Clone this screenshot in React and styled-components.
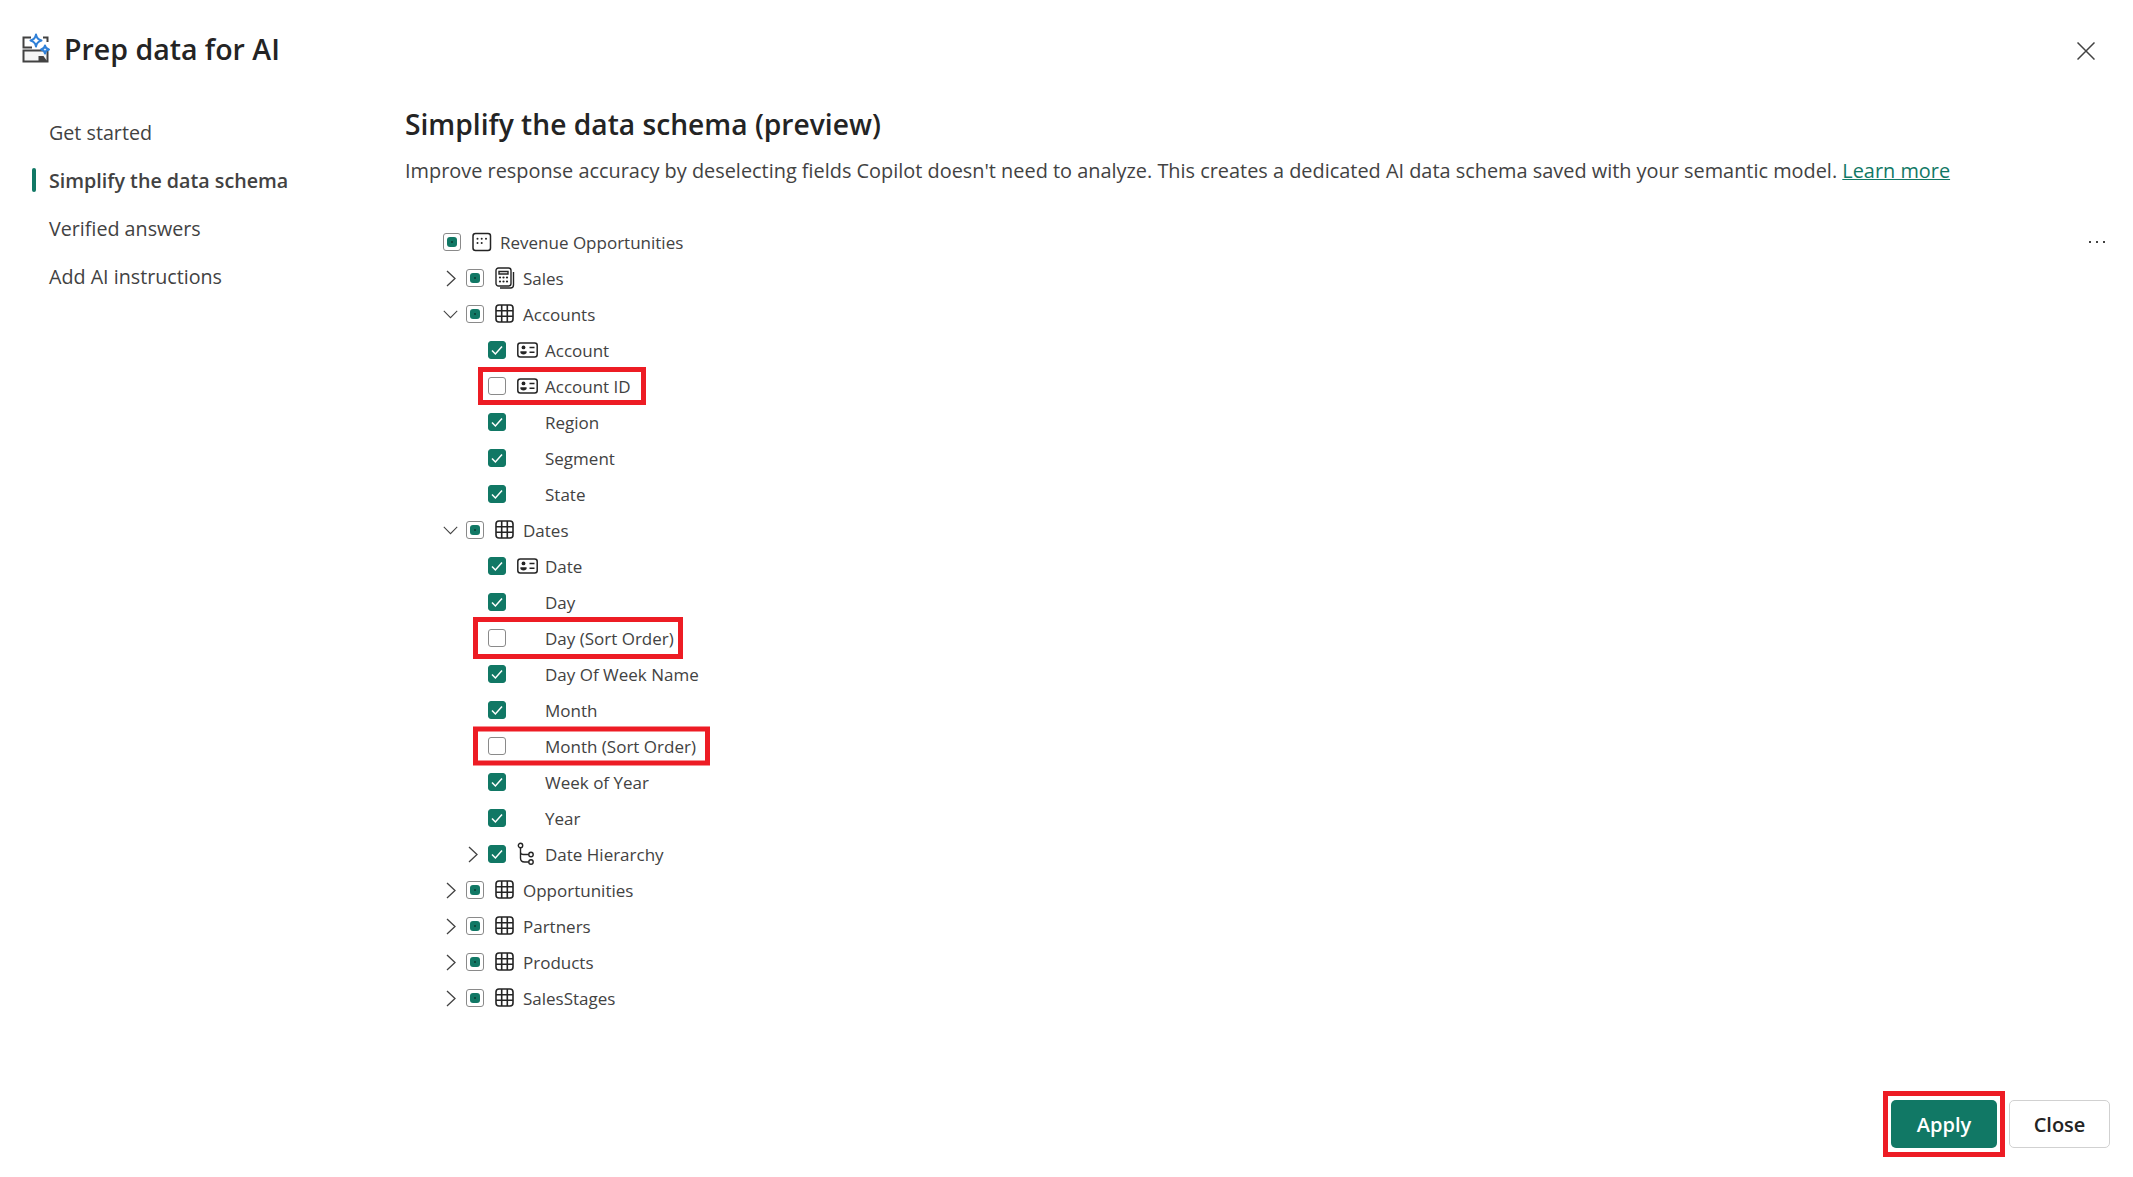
import React from "react";
import styled, { createGlobalStyle } from "styled-components";

const GlobalStyle = createGlobalStyle`
  html, body { margin: 0; padding: 0; background: #fff; }
  body { font-family: "Open Sans", "Noto Sans", "Liberation Sans", sans-serif; color: #424242; }
`;

const navItems = ["Get started", "Simplify the data schema", "Verified answers", "Add AI instructions"];

const tree = [
  { depth: 0, noSlot: true, state: "mixed", icon: "model", label: "Revenue Opportunities" },
  { depth: 0, chevron: "right", state: "mixed", icon: "calc", label: "Sales" },
  { depth: 0, chevron: "down", state: "mixed", icon: "table", label: "Accounts" },
  { depth: 1, state: "on", icon: "id", label: "Account" },
  { depth: 1, state: "off", icon: "id", label: "Account ID", mark: [13, 168, 38] },
  { depth: 1, state: "on", label: "Region" },
  { depth: 1, state: "on", label: "Segment" },
  { depth: 1, state: "on", label: "State" },
  { depth: 0, chevron: "down", state: "mixed", icon: "table", label: "Dates" },
  { depth: 1, state: "on", icon: "id", label: "Date" },
  { depth: 1, state: "on", label: "Day" },
  { depth: 1, state: "off", label: "Day (Sort Order)", mark: [8, 210, 42] },
  { depth: 1, state: "on", label: "Day Of Week Name" },
  { depth: 1, state: "on", label: "Month" },
  { depth: 1, state: "off", label: "Month (Sort Order)", mark: [8, 237, 39] },
  { depth: 1, state: "on", label: "Week of Year" },
  { depth: 1, state: "on", label: "Year" },
  { depth: 1, chevron: "right", state: "on", icon: "hier", label: "Date Hierarchy" },
  { depth: 0, chevron: "right", state: "mixed", icon: "table", label: "Opportunities" },
  { depth: 0, chevron: "right", state: "mixed", icon: "table", label: "Partners" },
  { depth: 0, chevron: "right", state: "mixed", icon: "table", label: "Products" },
  { depth: 0, chevron: "right", state: "mixed", icon: "table", label: "SalesStages" },
];

function PrepIcon() {
  return (
    <svg width="32" height="32" viewBox="0 0 32 32" fill="none">
      <path d="M11 4.5H3.5V14.5H12M23 4.5H27.5V9" stroke="#424242" strokeWidth="2" />
      <rect x="3.5" y="17.5" width="24" height="11" fill="#f5f5f5" stroke="#424242" strokeWidth="2" />
      <path d="M18.5 28V23H23.5L27 28Z" fill="#424242" />
      <path d="M16 1.5C16.6 5 18 6.6 21.5 7.5C18 8.4 16.6 10 16 13.5C15.4 10 14 8.4 10.5 7.5C14 6.6 15.4 5 16 1.5Z" fill="#fff" stroke="#2f80d8" strokeWidth="2" strokeLinejoin="round" />
      <path d="M25 12.5C25.4 15 26.2 16 29 16.5C26.2 17 25.4 18 25 20.5C24.6 18 23.8 17 21 16.5C23.8 16 24.6 15 25 12.5Z" fill="#fff" stroke="#2f80d8" strokeWidth="2" strokeLinejoin="round" />
    </svg>
  );
}

function FieldIcon({ type }) {
  if (type === "table")
    return (
      <svg width="20" height="20" viewBox="0 0 20 20" fill="none" stroke="#242424" strokeWidth="1.6">
        <rect x="1" y="1" width="17" height="17" rx="3" />
        <path d="M6.7 1V18M12.3 1V18M1 6.7H18M1 12.3H18" />
      </svg>
    );
  if (type === "calc")
    return (
      <svg width="20" height="22" viewBox="0 0 20 22" fill="none" stroke="#242424" strokeWidth="1.4">
        <rect x="1" y="1" width="15" height="18" rx="2.5" />
        <path d="M4 4.5H13V7H4Z" />
        <path d="M18.5 5V18C18.5 19.8 17.3 21 15.5 21H5" />
        <g fill="#242424" stroke="none">
          <circle cx="5" cy="10.5" r="1.1" /><circle cx="8.5" cy="10.5" r="1.1" /><circle cx="12" cy="10.5" r="1.1" />
          <circle cx="5" cy="14.5" r="1.1" /><circle cx="8.5" cy="14.5" r="1.1" /><circle cx="12" cy="14.5" r="1.1" />
        </g>
      </svg>
    );
  if (type === "model")
    return (
      <svg width="20" height="20" viewBox="0 0 20 20" fill="none" stroke="#242424" strokeWidth="1.5">
        <rect x="1" y="1.5" width="17.5" height="17" rx="2.5" />
        <g fill="#242424" stroke="none">
          <circle cx="5.5" cy="6.8" r="1" /><circle cx="9.7" cy="6.8" r="1" /><circle cx="14" cy="6.8" r="1" />
          <circle cx="5.5" cy="11" r="1" /><circle cx="9.7" cy="11" r="1" />
        </g>
      </svg>
    );
  if (type === "id")
    return (
      <svg width="21" height="16" viewBox="0 0 21 16" fill="none" stroke="#242424" strokeWidth="1.5">
        <rect x="0.8" y="1" width="19.4" height="14" rx="2.5" />
        <circle cx="6.5" cy="5.4" r="1.9" fill="#242424" stroke="none" />
        <path d="M3.4 9.2H9.6V10.2C9.6 11.6 8.3 12.4 6.5 12.4C4.7 12.4 3.4 11.6 3.4 10.2Z" fill="#242424" stroke="none" />
        <path d="M12.5 5.5H17.5M12.5 10.2H17.5" />
      </svg>
    );
  if (type === "hier")
    return (
      <svg width="18" height="24" viewBox="0 0 18 24" fill="none" stroke="#242424" strokeWidth="1.4">
        <circle cx="3.5" cy="3.5" r="2.2" />
        <circle cx="14" cy="12.5" r="2.2" />
        <circle cx="14" cy="20" r="2.2" />
        <path d="M3.5 5.7V16C3.5 18.4 5 20 7.5 20H11.8M3.5 10.2C3.5 11.7 5 12.5 6.5 12.5H11.8" />
      </svg>
    );
  return null;
}

function Chevron({ dir }) {
  if (dir === "down")
    return (
      <svg width="19" height="11" viewBox="0 0 19 11" fill="none" stroke="#424242" strokeWidth="1.3">
        <path d="M1 1L9.5 9.5L18 1" />
      </svg>
    );
  return (
    <svg width="10" height="17" viewBox="0 0 10 17" fill="none" stroke="#424242" strokeWidth="1.3">
      <path d="M1 1L9 8.5L1 16" />
    </svg>
  );
}

function TreeRow({ row }) {
  return (
    <Row $depth={row.depth}>
      {!row.noSlot && <Twist>{row.chevron && <Chevron dir={row.chevron} />}</Twist>}
      <Check $state={row.state}>
        {row.state === "on" && (
          <svg width="14" height="14" viewBox="0 0 14 14" fill="none" stroke="#fff" strokeWidth="1.5">
            <path d="M2 7.5L5.4 11L12 3.5" />
          </svg>
        )}
        {row.state === "mixed" && <MixedDot />}
      </Check>
      <IconSlot>{row.icon && <FieldIcon type={row.icon} />}</IconSlot>
      <Label>{row.label}</Label>
      {row.mark && <Callout $left={row.mark[0]} $width={row.mark[1]} $height={row.mark[2]} />}
    </Row>
  );
}

export default function App() {
  return (
    <Page>
      <GlobalStyle />
      <Header>
        <TitleGroup>
          <PrepIcon />
          <Title>Prep data for AI</Title>
        </TitleGroup>
        <CloseIcon>
          <svg width="18" height="18" viewBox="0 0 18 18" stroke="#424242" strokeWidth="1.5">
            <path d="M0.5 0.5L17.5 17.5M17.5 0.5L0.5 17.5" />
          </svg>
        </CloseIcon>
      </Header>
      <Body>
        <Nav>
          {navItems.map((item, i) => (
            <NavItem key={item} $active={i === 1}>{item}</NavItem>
          ))}
        </Nav>
        <Content>
          <Heading>Simplify the data schema (preview)</Heading>
          <Description>
            Improve response accuracy by deselecting fields Copilot doesn't need to analyze. This creates a dedicated AI data schema saved with your semantic model. <LearnMore href="#">Learn more</LearnMore>
          </Description>
          <TreeArea>
            <More>
              <i /><i /><i />
            </More>
            {tree.map((row) => (
              <TreeRow key={row.label} row={row} />
            ))}
          </TreeArea>
        </Content>
      </Body>
      <Footer>
        <ApplyButton>Apply</ApplyButton>
        <CloseButton>Close</CloseButton>
      </Footer>
    </Page>
  );
}

const Page = styled.div`
  width: 2133px;
  height: 1177px;
  display: flex;
  flex-direction: column;
  overflow: hidden;
`;
const Header = styled.header`
  height: 100px;
  padding: 0 38px 0 20px;
  box-sizing: border-box;
  display: flex;
  align-items: center;
  justify-content: space-between;
`;
const TitleGroup = styled.div`
  display: flex;
  align-items: center;
  gap: 12px;
  margin-top: -2px;
`;
const Title = styled.h1`
  margin: 0;
  font-size: 28.5px;
  line-height: 40px;
  font-weight: 600;
  color: #242424;
`;
const CloseIcon = styled.div`
  display: flex;
  margin-top: 1px;
`;
const Body = styled.div`
  flex: 1;
  display: flex;
  min-height: 0;
`;
const Nav = styled.nav`
  width: 405px;
  flex-shrink: 0;
  padding: 9px 0 0 32px;
  box-sizing: border-box;
`;
const NavItem = styled.div`
  position: relative;
  height: 48px;
  line-height: 48px;
  padding-left: 17px;
  font-size: 19.7px;
  font-weight: ${(p) => (p.$active ? 600 : 400)};
  color: #424242;
  ${(p) =>
    p.$active &&
    `&::before {
      content: "";
      position: absolute;
      left: 0;
      top: 11px;
      width: 4px;
      height: 24px;
      border-radius: 2px;
      background: #117865;
    }`}
`;
const Content = styled.main`
  flex: 1;
  min-width: 0;
  padding-top: 4px;
`;
const Heading = styled.h2`
  margin: 0;
  font-size: 28.2px;
  line-height: 40px;
  font-weight: 600;
  color: #242424;
`;
const Description = styled.p`
  margin: 13px 0 0;
  font-size: 19.9px;
  line-height: 28px;
  color: #424242;
`;
const LearnMore = styled.a`
  color: #117865;
  text-decoration: underline;
`;
const TreeArea = styled.div`
  position: relative;
  margin-top: 39px;
  padding-left: 38px;
`;
const More = styled.div`
  position: absolute;
  right: 28px;
  top: 17px;
  display: flex;
  gap: 5px;
  i {
    width: 2px;
    height: 2px;
    background: #424242;
  }
`;
const Row = styled.div`
  position: relative;
  height: 36px;
  display: flex;
  align-items: center;
  width: fit-content;
  margin-left: ${(p) => p.$depth * 22}px;
`;
const Twist = styled.span`
  width: 23px;
  box-sizing: border-box;
  padding-right: 8px;
  flex-shrink: 0;
  display: flex;
  justify-content: center;
`;
const Check = styled.span`
  width: 18px;
  height: 18px;
  box-sizing: border-box;
  flex-shrink: 0;
  border-radius: 3px;
  display: flex;
  align-items: center;
  justify-content: center;
  border: 1px solid ${(p) => (p.$state === "on" ? "#117865" : "#8a8a8a")};
  background: ${(p) => (p.$state === "on" ? "#117865" : "#fff")};
`;
const MixedDot = styled.span`
  width: 10px;
  height: 10px;
  border-radius: 3px;
  background: #117865;
  display: flex;
  align-items: center;
  justify-content: center;
  &::after {
    content: "";
    width: 2px;
    height: 2px;
    background: #0b3a30;
    border-radius: 50%;
  }
`;
const IconSlot = styled.span`
  width: 28px;
  margin-left: 11px;
  flex-shrink: 0;
  display: flex;
  align-items: center;
`;
const Label = styled.span`
  font-size: 17px;
  white-space: nowrap;
  color: #424242;
`;
const Callout = styled.span`
  position: absolute;
  left: ${(p) => p.$left}px;
  top: 50%;
  width: ${(p) => p.$width}px;
  height: ${(p) => p.$height}px;
  transform: translateY(-50%);
  box-sizing: border-box;
  border: 5px solid #ed1c24;
  pointer-events: none;
`;
const Footer = styled.footer`
  height: 77px;
  padding-right: 23px;
  box-sizing: border-box;
  display: flex;
  justify-content: flex-end;
  gap: 12px;
`;
const ApplyButton = styled.button`
  position: relative;
  width: 106px;
  height: 48px;
  border: none;
  border-radius: 5px;
  background: #117865;
  color: #fff;
  font: 600 20px "Open Sans", sans-serif;
  &::after {
    content: "";
    position: absolute;
    inset: -9px -8px;
    border: 5px solid #ed1c24;
  }
`;
const CloseButton = styled.button`
  width: 101px;
  height: 48px;
  box-sizing: border-box;
  border: 1px solid #d1d1d1;
  border-radius: 5px;
  background: #fff;
  color: #242424;
  font: 600 20px "Open Sans", sans-serif;
`;
